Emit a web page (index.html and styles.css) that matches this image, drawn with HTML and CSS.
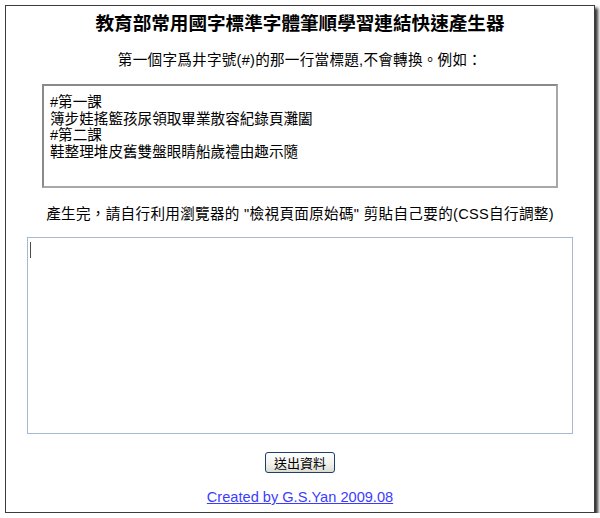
FILE: index.html
```html
<!DOCTYPE html>
<html lang="zh-Hant">
<head>
<meta charset="utf-8">
<title>教育部常用國字標準字體筆順學習連結快速產生器</title>
<link rel="stylesheet" href="styles.css">
</head>
<body>
<div class="frame">
  <h1 class="title">教育部常用國字標準字體筆順學習連結快速產生器</h1>
  <p class="note">第一個字爲井字號(#)的那一行當標題,不會轉換。例如：</p>
  <div class="example">#第一課<br>簿步娃搖籃孩尿領取畢業散容紀錄頁灘闔<br>#第二課<br>鞋整理堆皮舊雙盤眼睛船歲禮由趣示隨</div>
  <p class="note note-out">產生完，請自行利用瀏覽器的 "檢視頁面原始碼" 剪貼自己要的(CSS自行調整)</p>
  <div class="input-wrap">
    <textarea class="input"></textarea>
    <span class="caret"></span>
  </div>
  <button class="submit" type="button">送出資料</button>
  <a class="credit" href="#">Created by G.S.Yan 2009.08</a>
</div>
</body>
</html>
```

FILE: styles.css
```css
html, body {
  margin: 0;
  padding: 0;
  background: #ffffff;
}

body {
  font-family: "Liberation Sans", "Noto Sans CJK TC", sans-serif;
  color: #000;
}

.frame {
  box-sizing: border-box;
  margin: 5px 0 0 5px;
  width: 590px;
  height: 508px;
  border: 1px solid #3c3c3c;
  background: #fff;
  box-shadow: 3px 3px 3px rgba(30, 30, 30, 0.9);
  display: flex;
  flex-direction: column;
  align-items: center;
}

.title {
  margin: 5px 0 0 0;
  font-family: "Noto Sans CJK TC", sans-serif;
  font-size: 18.6px;
  font-weight: bold;
  line-height: 22px;
  white-space: nowrap;
}

.note {
  margin: 19px 0 0 0;
  font-size: 14.6px;
  line-height: 16px;
  letter-spacing: 0.25px;
  white-space: nowrap;
}

.example {
  box-sizing: border-box;
  align-self: stretch;
  margin: 16px 36px 0 36px;
  height: 104px;
  border: 2px solid #8a8a8a;
  border-right-color: #a8a8a8;
  border-bottom-color: #a8a8a8;
  padding: 8px 6px;
  font-size: 14.6px;
  line-height: 16.5px;
  text-align: left;
}

.note-out {
  margin-top: 18px;
  letter-spacing: 0.3px;
}

.input-wrap {
  position: relative;
  margin: 15px 0 0 0;
  width: 546px;
  height: 197px;
}

.input {
  box-sizing: border-box;
  display: block;
  width: 100%;
  height: 100%;
  margin: 0;
  border: 1px solid #a5b9d1;
  background: #fff;
  resize: none;
  outline: none;
}

.caret {
  position: absolute;
  left: 3px;
  top: 5px;
  width: 1px;
  height: 16px;
  background: #4a4a4a;
}

.submit {
  box-sizing: border-box;
  margin: 18px 0 0 0;
  width: 70px;
  height: 21px;
  padding: 0;
  border: 1px solid #1e3f6e;
  border-radius: 3px;
  background: linear-gradient(#fefefe, #f1f1ec 60%, #dcdcd4);
  font-family: "Noto Sans CJK TC", sans-serif;
  font-size: 13px;
  line-height: 19px;
  color: #000;
}

.credit {
  margin: 15px 0 0 0;
  font-size: 14.6px;
  line-height: 18px;
  color: #3c3cff;
  text-decoration: underline;
  white-space: nowrap;
}
```
